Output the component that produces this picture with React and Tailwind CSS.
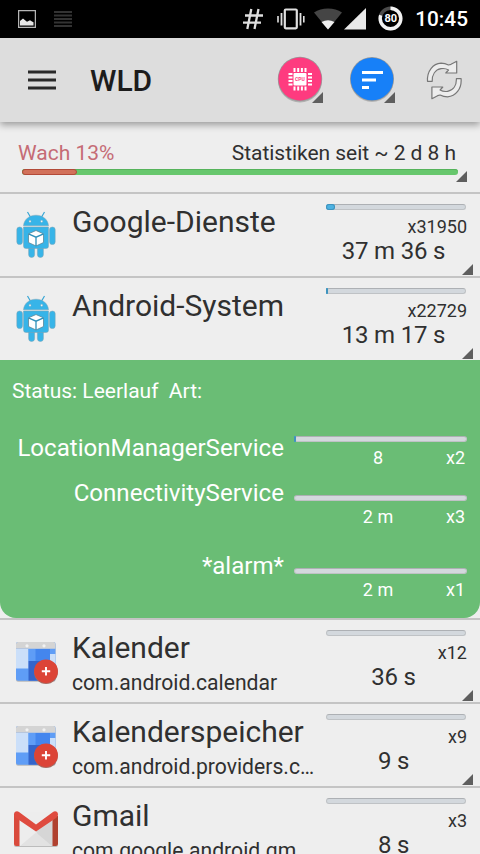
import clsx from 'clsx'

const summary = { awake: 13, since: 'Statistiken seit ~ 2 d 8 h' }

const apps = [
  { icon: 'android', name: 'Google-Dienste', count: 'x31950', time: '37 m 36 s', bar: 9 },
  { icon: 'android', name: 'Android-System', count: 'x22729', time: '13 m 17 s', bar: 2, open: true },
  { icon: 'calendar', name: 'Kalender', pkg: 'com.android.calendar', count: 'x12', time: '36 s', bar: 0 },
  { icon: 'calendar', name: 'Kalenderspeicher', pkg: 'com.android.providers.c…', count: 'x9', time: '9 s', bar: 0 },
  { icon: 'gmail', name: 'Gmail', pkg: 'com.google.android.gm', count: 'x3', time: '8 s', bar: 0 },
]

const wakelocks = [
  { name: 'LocationManagerService', value: '8', count: 'x2', bar: 2, row: 'h-[59px]', label: '-mt-0.5' },
  { name: 'ConnectivityService', value: '2 m', count: 'x3', bar: 0, row: 'h-[73px]', label: '-mt-4' },
  { name: '*alarm*', value: '2 m', count: 'x1', bar: 0, row: 'h-[50px]', label: '-mt-4' },
]

function Corner({ className }) {
  return (
    <svg className={clsx('absolute h-[11px] w-[11px]', className)} viewBox="0 0 11 11">
      <path d="M11 0v11H0z" fill="#5e5e5e" />
    </svg>
  )
}

function StatusBar() {
  return (
    <div className="flex h-[38px] shrink-0 items-center bg-black pl-[18px] pr-3 text-white">
      <svg width="18" height="18" viewBox="0 0 18 18">
        <rect x="0.6" y="0.6" width="16.8" height="16.8" fill="none" stroke="#b5b5b5" strokeWidth="1.3" />
        <path d="M2 15.500v-4.500l3-2.500 3 2.500 1 .8 3-1.500 2 1.200 1.500.8v3.200z" fill="#e6e6e6" />
      </svg>
      <svg className="ml-[18px]" width="18" height="18" viewBox="0 0 18 18" stroke="#333" strokeWidth="1.8">
        <path d="M0 2h18M0 5.500h18M0 9h18M0 12.500h18M0 16h18" />
      </svg>
      <div className="flex-1" />
      <svg width="20" height="22" viewBox="0 0 20 22" stroke="#dedede" strokeWidth="2.300" fill="none">
        <path d="M8.300 1 4.300 21M15.500 1l-4 20M2 7.500h18M0 14.700h18" />
      </svg>
      <svg className="ml-3.5" width="28" height="22" viewBox="0 0 28 22" stroke="#e0e0e0" fill="none">
        <rect x="7.800" y="1.500" width="12" height="18.800" rx="1" strokeWidth="2.200" />
        <path d="M4.500 5v12.500M23.500 5v12.500" strokeWidth="1.800" />
        <path d="M1 8v6.500M26.800 8v6.500" strokeWidth="1.600" />
      </svg>
      <svg className="ml-[9px]" width="28" height="22" viewBox="1 0 28 22">
        <path d="M15 21.500 1 4.500Q7 .5 15 .5T29 4.500z" fill="#454545" />
        <path d="M15 21.500 8.500 14Q15 10.500 21.500 14z" fill="#efefef" />
      </svg>
      <svg className="ml-[2px]" width="22" height="22" viewBox="0 0 22 22">
        <path d="M22 0v21.500H0z" fill="#e8e8e8" />
      </svg>
      <div className="relative ml-3 mb-0.5 grid size-[25px] place-items-center">
        <svg className="absolute inset-0" width="25" height="25" viewBox="0 0 25 25" fill="none" strokeWidth="3.400">
          <circle cx="12.500" cy="12.500" r="10.300" stroke="#4a4a4a" />
          <circle cx="12.500" cy="12.500" r="10.300" stroke="#f2f2f2" pathLength="100" strokeDasharray="80 20" transform="rotate(-90 12.500 12.500)" />
        </svg>
        <span className="relative text-[11px] font-bold leading-none">80</span>
      </div>
      <span className="ml-3 text-[20.800px] font-medium leading-none">10:45</span>
    </div>
  )
}

function CpuIcon() {
  return (
    <svg width="46" height="48" viewBox="0 0 46 48">
      <circle cx="23" cy="24.500" r="22" fill="#b0b0b0" />
      <circle cx="23" cy="23" r="22.200" fill="#999" />
      <circle cx="23" cy="23" r="21.500" fill="#fe3b7f" />
      <g fill="#fff">
        <rect x="16.500" y="17" width="13" height="12.500" rx="1" />
        <path d="M16.500 12h2v4h-2zM20.200 12h2v4h-2zM23.900 12h2v4h-2zM27.500 12h2v4h-2zM16.500 30.500h2v4h-2zM20.200 30.500h2v4h-2zM23.900 30.500h2v4h-2zM27.500 30.500h2v4h-2z" />
        <path d="M11.500 17h4v2h-4zM11.500 20.500h4v2h-4zM11.500 24h4v2h-4zM11.500 27.500h4v2h-4zM31 17h4v2h-4zM31 20.500h4v2h-4zM31 24h4v2h-4zM31 27.500h4v2h-4z" />
      </g>
      <text x="23" y="25.200" textAnchor="middle" fontSize="5" fontWeight="700" fill="#fe3b7f">CPU</text>
    </svg>
  )
}

function SortIcon() {
  return (
    <svg width="46" height="48" viewBox="0 0 46 48">
      <circle cx="23" cy="24.500" r="21.500" fill="#b5b5b5" />
      <circle cx="23" cy="23" r="22" fill="#999" />
      <circle cx="23" cy="23" r="21.300" fill="#1780f8" />
      <path d="M13 16.500h21M13 24h14M13 31.500h7" stroke="#fff" strokeWidth="3" />
    </svg>
  )
}

function RefreshIcon() {
  const arrow = 'M1.500 21.300C.8 11 7 3.600 15 3.200c3 0 5.200.6 7.500 1.800l2.500-.7L30.700 1.300V13H19.800l2.700-3C20.500 8.800 18 8.200 15 8.700 9 9.800 6 15 6.200 21.300z'

  return (
    <svg width="36" height="40" viewBox="0 0 36 40" fill="#ededed" stroke="#777" strokeWidth="1.200" strokeLinejoin="round">
      <path d={arrow} />
      <path d={arrow} transform="rotate(180 18.300 20)" />
    </svg>
  )
}

function Toolbar() {
  return (
    <div className="relative z-10 flex h-[84px] shrink-0 items-center bg-[#dddddd] pl-7 pr-[18px] shadow-[0_3px_7px_rgba(0,0,0,0.35)]">
      <svg className="-mt-px" width="28" height="22" viewBox="0 0 28 22" stroke="#2a2a2a" strokeWidth="2.800">
        <path d="M0 3h28M0 11h28M0 19h28" />
      </svg>
      <h1 className="ml-[34px] flex-1 text-[30px] font-medium text-[#1c1c1c]">WLD</h1>
      <div className="relative mr-[26px]">
        <CpuIcon />
        <Corner className="right-0 bottom-px" />
      </div>
      <div className="relative mr-[31px]">
        <SortIcon />
        <Corner className="right-0 bottom-px" />
      </div>
      <RefreshIcon />
    </div>
  )
}

function Summary() {
  return (
    <div className="relative h-[72px] shrink-0 border-b-2 border-[#c4c4c4] pt-[18px]">
      <div className="flex justify-between pr-6 pl-[18px] text-[21px] leading-[26px]">
        <span className="text-[#c56b75]">Wach {summary.awake}%</span>
        <span className="tracking-[-0.04px]">{summary.since}</span>
      </div>
      <div className="mt-[3px] mr-[22px] ml-[22px] h-1.5 rounded-full bg-[#67c76d] shadow-[inset_0_1px_0_#55b35b]">
        <div className="h-1.5 w-[55px] rounded-full border border-[#b24a38] bg-[#d2715a]" />
      </div>
      <Corner className="right-[13px] bottom-2.5" />
    </div>
  )
}

function Bar({ value, className }) {
  return (
    <div className={clsx('h-1.5 border border-[#bfc2c5] border-t-[#adb0b4] bg-[#d3d8dd]', className)}>
      {value > 0 && (
        <div className="-mt-px -ml-px h-1.5 rounded-full bg-[#4db2e2] shadow-[inset_0_0_0_1px_#3f93bd]" style={{ width: value }} />
      )}
    </div>
  )
}

function AndroidIcon() {
  return (
    <svg width="40" height="48" viewBox="0 0 40 48" fill="#37b4e8" stroke="#7fa3b3" strokeWidth="0.500">
      <path d="M11.500 1 15 7M28.500 1 25 7" stroke="#37a5d4" strokeWidth="1.200" />
      <path d="M7.500 14.800C8 8.500 13 4.200 20 4.200s12 4.300 12.500 10.600z" />
      <rect x="0.800" y="16" width="5.700" height="17.500" rx="2.850" />
      <rect x="33.500" y="16" width="5.700" height="17.500" rx="2.850" />
      <path d="M12.600 34h6v9.500a3 3 0 0 1-6 0zM21.400 34h6v9.500a3 3 0 0 1-6 0z" />
      <path d="M7.500 16h25v19a2.500 2.500 0 0 1-2.500 2.500H10A2.500 2.500 0 0 1 7.500 35z" />
      <circle cx="14" cy="10.300" r="1.100" fill="#fff" />
      <circle cx="25.700" cy="10.300" r="1.100" fill="#fff" />
      <path d="m20 19.500 7.500 3.300v8.700L20 35l-7.500-3.500v-8.700z" fill="#fff" stroke="#5c8798" strokeWidth="0.800" />
      <path d="m12.500 22.800 7.500 3.400 7.500-3.400M20 26.200V35" fill="none" stroke="#2f91ba" strokeWidth="1.300" />
    </svg>
  )
}

function CalendarIcon() {
  return (
    <svg className="mt-px" width="44" height="44" viewBox="0 0 44 44">
      <rect x="2" y="2.700" width="39.500" height="39" rx="2" fill="#b9b9b9" />
      <rect x="2" y="2" width="39.500" height="38.700" rx="2" fill="#5f9df6" />
      <path d="M2 8.800V4a2 2 0 0 1 2-2h35.500a2 2 0 0 1 2 2v4.800z" fill="#d4d4d4" />
      <circle cx="13" cy="5.800" r="1.600" fill="#f2f2f2" />
      <circle cx="30" cy="5.800" r="1.600" fill="#f2f2f2" />
      <path d="M2 9h12.500v19.500H2z" fill="#cbdff9" />
      <path d="M14.500 9h7v12h-7z" fill="#5f9df6" />
      <path d="M21.500 9H36v12H21.500z" fill="#4486ee" />
      <path d="M14.500 21H36v19.700H14.500z" fill="#3465cb" />
      <path d="M36 14h5.500v14H36z" fill="#cbdff9" />
      <circle cx="32" cy="32" r="12" fill="#a9685f" />
      <circle cx="32" cy="31.200" r="11.800" fill="#dc4437" />
      <path d="M32 27v8.400M27.800 31.200h8.400" stroke="#fff" strokeWidth="1.900" />
    </svg>
  )
}

function GmailIcon() {
  return (
    <svg width="46" height="38" viewBox="0 0 46 38">
      <rect x="1" y="2.500" width="44" height="34.500" rx="2" fill="#bcbcbc" />
      <rect x="1" y="1.500" width="44" height="34.500" rx="2" fill="#ededed" />
      <path d="M23 21 40 8v28H30z" fill="#d6d6d6" />
      <path d="M7 36 23 22.500 39 36z" fill="#e2e2e2" />
      <path d="M1 4h5.500v32H3a2 2 0 0 1-2-2z" fill="#d94a3c" />
      <path d="M39.500 6H45v28a2 2 0 0 1-2 2h-3.500z" fill="#b0412f" />
      <path d="M1 4.500C1 1.500 4 .5 6 2l17 12.500L40 2c2-1.500 5-.5 5 2.500 0 1.500-.8 2.500-2 3.500L23 21.500 3 8C1.800 7 1 6 1 4.500z" fill="#df4b3f" />
    </svg>
  )
}

const icons = { android: AndroidIcon, calendar: CalendarIcon, gmail: GmailIcon }

function AppRow({ app }) {
  const Icon = icons[app.icon]

  return (
    <div className={clsx('relative flex shrink-0', app.open ? 'h-[82px]' : 'h-[84px] border-b-2 border-[#c4c4c4]')}>
      <div className="flex h-[82px] w-[72px] shrink-0 items-center justify-center">
        <Icon />
      </div>
      <div className="w-[246px] shrink-0 pt-2.5">
        <div className="text-[30px] leading-9 whitespace-nowrap">{app.name}</div>
        {app.pkg && <div className="mt-[4px] text-[21.150px] leading-[26px] whitespace-nowrap">{app.pkg}</div>}
      </div>
      <div className="w-[149px] shrink-0 pt-2.5">
        <Bar value={app.bar} className="mr-px ml-2 rounded-full" />
        <div className="mt-[7px] text-right text-[18px] leading-5">{app.count}</div>
        <div className="pl-0.5 text-center text-[24px] leading-7 tracking-[-0.2px]">{app.time}</div>
      </div>
      <Corner className="top-[70px] right-[7px]" />
    </div>
  )
}

function Details() {
  return (
    <div className="border-b-2 border-[#c4c4c4]">
      <div className="h-[258px] rounded-b-2xl bg-[#6abd75] pt-[18px] text-white">
        <div className="pl-3 text-[21px] leading-[26px] whitespace-pre">Status: Leerlauf  Art:</div>
        <div className="pt-8">
          {wakelocks.map((lock) => (
            <div key={lock.name} className={clsx('flex', lock.row)}>
              <div className={clsx('w-[284px] shrink-0 text-right text-[24.100px] leading-7', lock.label)}>{lock.name}</div>
              <div className="ml-2.5 w-[173px]">
                <Bar value={lock.bar} className="rounded-sm" />
                <div className="mt-1.5 grid grid-cols-[168px_5px] text-[18px] leading-5">
                  <div className="relative text-center">
                    {lock.value}
                    <span className="absolute top-0 -right-[3px]">{lock.count}</span>
                  </div>
                </div>
              </div>
            </div>
          ))}
        </div>
      </div>
    </div>
  )
}

function App() {
  return (
    <div className="flex h-screen w-[480px] flex-col overflow-hidden bg-[#eeeeee] font-['Roboto',sans-serif] text-[#303030]">
      <StatusBar />
      <Toolbar />
      <Summary />
      {apps.map((app) => (
        <div key={app.name} className="shrink-0">
          <AppRow app={app} />
          {app.open && <Details />}
        </div>
      ))}
    </div>
  )
}

export default App
